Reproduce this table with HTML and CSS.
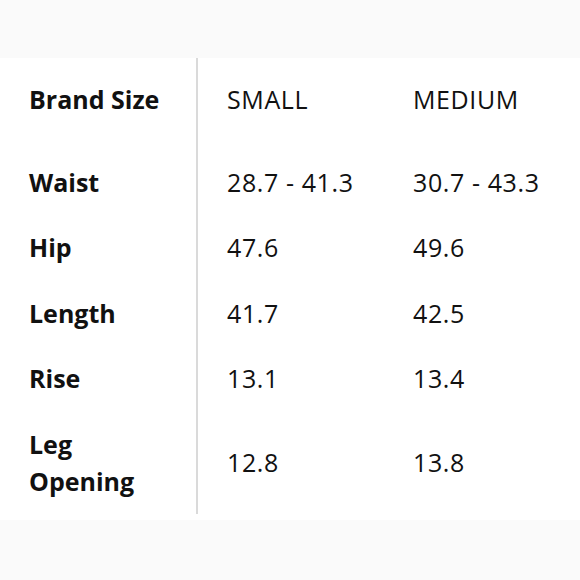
FILE: index.html
```html
<!DOCTYPE html>
<html>
<head>
<meta charset="utf-8">
<link rel="stylesheet" href="styles.css">
</head>
<body>
<div class="panel">
  <div class="grid">
    <div class="cell label head">Brand Size</div>
    <div class="cell val head">SMALL</div>
    <div class="cell val head">MEDIUM</div>

    <div class="cell label">Waist</div>
    <div class="cell val">28.7 - 41.3</div>
    <div class="cell val">30.7 - 43.3</div>

    <div class="cell label">Hip</div>
    <div class="cell val">47.6</div>
    <div class="cell val">49.6</div>

    <div class="cell label">Length</div>
    <div class="cell val">41.7</div>
    <div class="cell val">42.5</div>

    <div class="cell label">Rise</div>
    <div class="cell val">13.1</div>
    <div class="cell val">13.4</div>

    <div class="cell label">Leg<br>Opening</div>
    <div class="cell val">12.8</div>
    <div class="cell val">13.8</div>
  </div>
</div>
</body>
</html>
```
FILE: styles.css
```css
html, body {
  margin: 0;
  padding: 0;
}
body {
  background: #fafafa;
  font-family: "Open Sans", "Noto Sans", sans-serif;
  color: #111;
  width: 580px;
  height: 580px;
  overflow: hidden;
}
.panel {
  margin-top: 58px;
  height: 462px;
  background: #fff;
  box-sizing: border-box;
  padding-bottom: 6px;
}
.grid {
  display: grid;
  grid-template-columns: 198px 186px 1fr;
  grid-template-rows: 92px 65px 65px 66px 65px 103px;
}
.cell {
  display: flex;
  align-items: center;
  font-size: 25px;
  line-height: 37px;
}
.head {
  padding-bottom: 10px;
}
.label {
  font-weight: 700;
  padding-left: 29px;
  border-right: 2px solid #dadada;
}
.val {
  font-weight: 400;
  letter-spacing: 0.6px;
  padding-left: 29px;
}
```
